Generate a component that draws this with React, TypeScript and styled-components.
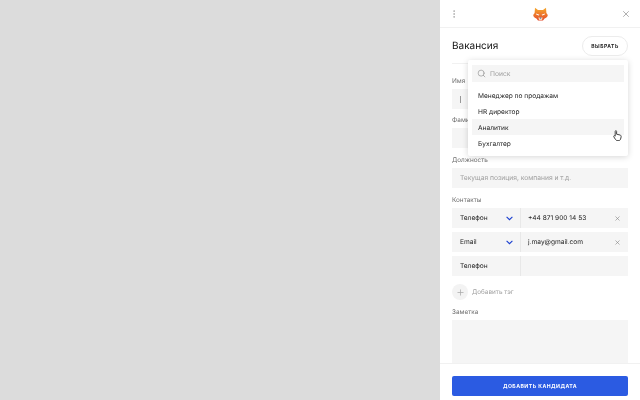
import React from "react";
import styled, { createGlobalStyle } from "styled-components";
import { MoreVertical, Plus, Search, X } from "lucide-react";

const Global = createGlobalStyle`
  html, body { margin: 0; padding: 0; width: 640px; height: 400px; overflow: hidden; }
  * { box-sizing: border-box; }
  body { font-family: Inter, Roboto, "Liberation Sans", sans-serif; }
`;

const Page = styled.div`
  width: 640px;
  height: 400px;
  background: #dcdcdc;
  display: flex;
  justify-content: flex-end;
`;
const Panel = styled.aside`
  position: relative;
  width: 200px;
  height: 400px;
  background: #fff;
  display: flex;
  flex-direction: column;
  will-change: transform;
  text-rendering: geometricPrecision;
`;
const Header = styled.header`
  flex: none;
  height: 28px;
  padding: 0 9px;
  display: flex;
  align-items: center;
  justify-content: space-between;
  border-bottom: 1px solid #f1f1f1;
`;
const Logo = styled.svg`
  width: 15px;
  height: 14px;
`;
const IconButton = styled.span<{ $color?: string }>`
  display: flex;
  color: ${(p) => p.$color ?? "#808080"};
`;
const Body = styled.div`
  flex: 1;
  min-height: 0;
  overflow: hidden;
  padding: 0 12px;
`;
const TitleRow = styled.div`
  box-sizing: content-box;
  height: 19px;
  margin-top: 8px;
  padding-bottom: 8px;
  display: flex;
  align-items: center;
  justify-content: space-between;
  border-bottom: 1px solid #f1f1f1;
`;
const Title = styled.h1`
  margin: 0;
  font-size: 10px;
  font-weight: 400;
  color: #111;
`;
const PickButton = styled.button`
  width: 46px;
  height: 20px;
  padding: 0;
  border: 1px solid #ececec;
  border-radius: 10px;
  background: #fff;
  color: #222;
  font: 700 5px Inter, Roboto, sans-serif;
  letter-spacing: 0.5px;
`;
const Label = styled.div<{ $top: number }>`
  height: 9px;
  margin: ${(p) => p.$top}px 0 4px;
  font-size: 6.4px;
  line-height: 11px;
  color: #6e6e6e;
`;
const Field = styled.div`
  height: 20px;
  padding: 0 8px;
  display: flex;
  align-items: center;
  background: #f5f5f5;
  font-size: 6.7px;
  color: #a0a0a0;
`;
const Caret = styled.span`
  width: 1px;
  height: 7px;
  background: #999;
`;
const ContactRow = styled.div`
  height: 20px;
  margin-bottom: 4px;
  display: grid;
  grid-template-columns: 69px 1fr;
  background: #f5f5f5;
  font-size: 6.6px;
  color: #1c1c1c;
`;
const TypeCell = styled.div`
  padding: 0 7px 0 8px;
  display: flex;
  align-items: center;
  justify-content: space-between;
  border-right: 1px solid #e8e8e8;
`;
const ValueCell = styled.div`
  padding: 0 7px;
  display: flex;
  align-items: center;
  justify-content: space-between;
`;
const Chevron = styled.svg`
  width: 7px;
  height: 5px;
  fill: none;
  stroke: #1a3fd0;
  stroke-width: 1.1;
`;
const AddTag = styled.div`
  margin-top: 8px;
  height: 16px;
  display: flex;
  align-items: center;
  gap: 4px;
  font-size: 6.4px;
  color: #a0a0a0;
`;
const AddCircle = styled.span`
  width: 16px;
  height: 16px;
  border-radius: 50%;
  background: #f3f3f3;
  color: #aaa;
  display: flex;
  align-items: center;
  justify-content: center;
`;
const TextArea = styled.div`
  height: 60px;
  background: #f5f5f5;
`;
const Footer = styled.footer`
  flex: none;
  height: 37px;
  padding: 8px 12px;
  background: #fff;
  border-top: 1px solid #f1f1f1;
`;
const SubmitButton = styled.button`
  width: 100%;
  height: 20px;
  padding: 0;
  border: 0;
  border-radius: 2px;
  background: #2b5be2;
  color: #fff;
  font: 700 5.2px Inter, Roboto, sans-serif;
  letter-spacing: 0.45px;
`;
const Dropdown = styled.div`
  position: absolute;
  left: 28px;
  top: 60px;
  width: 160px;
  height: 96px;
  padding: 5px 4px;
  background: #fff;
  border-radius: 2px;
  box-shadow: 0 1px 6px rgba(0, 0, 0, 0.16);
`;
const SearchBox = styled.div`
  height: 17px;
  margin-bottom: 5px;
  padding: 0 5px;
  display: flex;
  align-items: center;
  gap: 4px;
  background: #f5f5f5;
  font-size: 6.7px;
  color: #a0a0a0;
`;
const Item = styled.div<{ $active?: boolean }>`
  height: 16px;
  padding: 1px 6px 0;
  display: flex;
  align-items: center;
  font-size: 6.6px;
  color: #1c1c1c;
  background: ${(p) => (p.$active ? "#f5f5f5" : "transparent")};
`;
const HandCursor = styled.svg`
  position: absolute;
  left: 145px;
  top: 70px;
  width: 9px;
  height: 11px;
  fill: #fff;
  stroke: #444;
  stroke-width: 1;
`;

const contacts = [
  { type: "Телефон", value: "+44 871 900 14 53", active: true },
  { type: "Email", value: "j.may@gmail.com", active: true },
  { type: "Телефон", value: "", active: false },
];
const options = ["Менеджер по продажам", "HR директор", "Аналитик", "Бухгалтер"];

export default function App() {
  return (
    <Page>
      <Global />
      <Panel>
        <Header>
          <IconButton $color="#aaa"><MoreVertical size={10} /></IconButton>
          <Logo viewBox="0 0 15 14">
            <defs>
              <linearGradient id="fox" x1="0" y1="0" x2="0" y2="1">
                <stop offset="0" stopColor="#f6a92c" />
                <stop offset="1" stopColor="#e4492a" />
              </linearGradient>
            </defs>
            <path d="M2 0.8 L5 3 H10 L13 0.8 L13.4 6 L14.8 8 C14.8 10 13 10.8 11.6 11.4 L10 13.6 H5 L3.4 11.4 C2 10.8 0.2 10 0.2 8 L1.6 6 Z" fill="url(#fox)" />
            <path d="M3 6.5 L6.4 7.8 L5.8 8.6 L3.5 7.8 Z M12 6.5 L8.6 7.8 L9.2 8.6 L11.5 7.8 Z" fill="#fff" />
            <path d="M5.4 10.4 H9.6 L9 13 H6 Z" fill="#f6d6b4" />
            <path d="M6.5 10.6 H8.5 L7.5 12 Z" fill="#3b6fb5" />
          </Logo>
          <IconButton><X size={10} strokeWidth={1.5} /></IconButton>
        </Header>
        <Body>
          <TitleRow>
            <Title>Вакансия</Title>
            <PickButton>ВЫБРАТЬ</PickButton>
          </TitleRow>
          <Label $top={12}>Имя</Label>
          <Field><Caret /></Field>
          <Label $top={6}>Фамилия</Label>
          <Field />
          <Label $top={7}>Должность</Label>
          <Field>Текущая позиция, компания и т.д.</Field>
          <Label $top={7}>Контакты</Label>
          {contacts.map((c, i) => (
            <ContactRow key={i}>
              <TypeCell>
                {c.type}
                {c.active && (
                  <Chevron viewBox="0 0 7 5"><path d="M0.6 0.8 L3.5 3.7 L6.4 0.8" /></Chevron>
                )}
              </TypeCell>
              <ValueCell>
                {c.value}
                {c.active && <IconButton><X size={7} strokeWidth={2} /></IconButton>}
              </ValueCell>
            </ContactRow>
          ))}
          <AddTag>
            <AddCircle><Plus size={9} /></AddCircle>
            Добавить тэг
          </AddTag>
          <Label $top={7}>Заметка</Label>
          <TextArea />
        </Body>
        <Footer>
          <SubmitButton>ДОБАВИТЬ КАНДИДАТА</SubmitButton>
        </Footer>
        <Dropdown>
          <SearchBox>
            <IconButton><Search size={9} strokeWidth={1.5} /></IconButton>
            Поиск
          </SearchBox>
          {options.map((o, i) => (
            <Item key={o} $active={i === 2}>{o}</Item>
          ))}
          <HandCursor viewBox="0 0 9 11">
            <path d="M2.2 1.4 C2.2 0.4 3.6 0.4 3.6 1.4 V4.2 L7 5 C8 5.3 8.3 6 8.1 7 L7.6 9 C7.4 10 6.8 10.5 5.8 10.5 H4.2 C3.4 10.5 3 10.2 2.5 9.5 L0.8 6.8 C0.3 6 1.3 5.2 2 5.9 L2.2 6.2 Z" />
          </HandCursor>
        </Dropdown>
      </Panel>
    </Page>
  );
}
